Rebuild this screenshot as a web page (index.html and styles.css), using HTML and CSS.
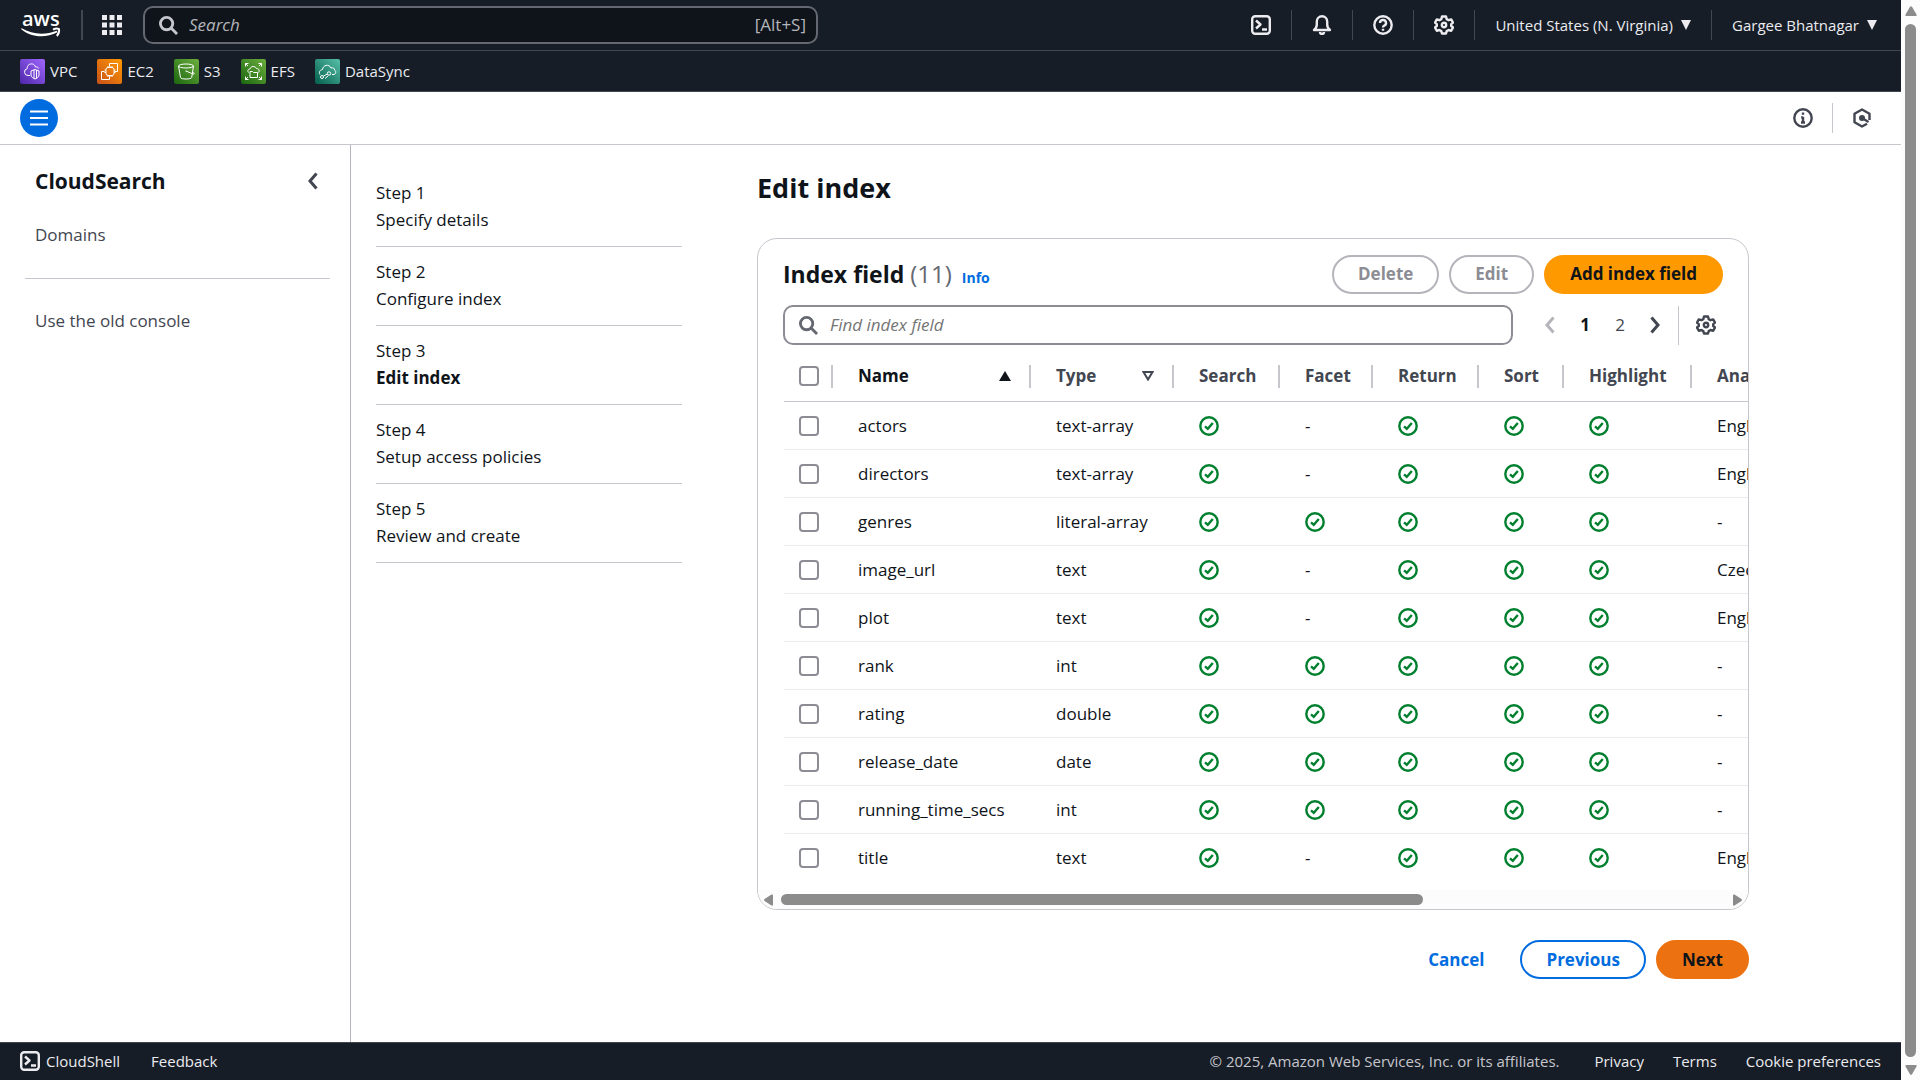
FILE: index.html
```html
<!DOCTYPE html>
<html lang="en">
<head>
<meta charset="utf-8">
<title>Edit index - CloudSearch</title>
<link rel="stylesheet" href="styles.css">
</head>
<body>
<svg class="sprite" aria-hidden="true">
  <symbol id="check" viewBox="0 0 20 20"><circle cx="10" cy="10" r="8.700"/><path d="M6 10.300l2.800 2.500L13.800 7"/></symbol>
  <symbol id="gear" viewBox="0 0 20 20"><path d="M8 1.500h4l.7 2.600 1.900 1.100 2.600-.8 1.800 3.300-1.800 1.500v1.800l1.800 1.500-1.800 3.300-2.600-.8-1.900 1.100-.7 2.400H8l-.7-2.400-1.900-1.100-2.600.8L1 12.500l1.800-1.500V9.200L1 7.700l1.800-3.300 2.600.8 1.900-1.100z"/><circle cx="10" cy="10" r="2.200"/></symbol>
  <symbol id="shell" viewBox="0 0 20 20"><rect x="1.200" y="1.200" width="17.600" height="17.600" rx="3"/><path d="M5 5.500l4.500 4L5 13.500M11 14.500h5"/></symbol>
  <symbol id="search" viewBox="0 0 20 20"><circle cx="8" cy="8" r="6.500"/><path d="M13 13l6 6"/></symbol>
  <symbol id="prev" viewBox="0 0 10 18"><path d="M8.500 1.500L2 9l6.500 7.500"/></symbol>
  <symbol id="next" viewBox="0 0 10 18"><path d="M1.500 1.500L8 9l-6.500 7.500"/></symbol>
  <symbol id="down" viewBox="0 0 10 10"><path d="M0 0h10L5 10z"/></symbol>
</svg>

<div class="page">
  <header class="topnav">
    <a class="logo" href="#" aria-label="AWS home">
      <svg width="40" height="44" viewBox="0 -8 40 44"><text x="1" y="15">aws</text><path class="smile" d="M0 18c10 8.500 24 9.500 36.500 3.200l-.8-1.500C24 24.500 11 23.500.6 17.300z"/><path class="tip" d="M32 18.600c2.500-1.200 5-1 6-.4.300 2-.4 5-2.200 6.800"/></svg>
    </a>
    <span class="bar bar-logo"></span>
    <button class="icon-button" aria-label="Services">
      <svg class="apps" width="20" height="20" viewBox="0 0 20 20"><path d="M0 0h5v5H0zM7.500 0h5v5h-5zM15 0h5v5h-5zM0 7.500h5v5H0zM7.500 7.500h5v5h-5zM15 7.500h5v5h-5zM0 15h5v5H0zM7.500 15h5v5h-5zM15 15h5v5h-5z"/></svg>
    </button>
    <label class="global-search">
      <svg class="line" width="19" height="19"><use href="#search"/></svg>
      <input type="search" placeholder="Search" aria-label="Search">
      <span class="hint">[Alt+S]</span>
    </label>
    <div class="utilities">
      <button class="icon-button" aria-label="CloudShell"><svg class="line" width="20" height="20"><use href="#shell"/></svg></button>
      <span class="bar"></span>
      <button class="icon-button" aria-label="Notifications"><svg class="line" width="20" height="20" viewBox="0 0 20 20"><path d="M2 15c2-1.500 2.800-3 2.800-5.500V6.500a5.200 5.200 0 0 1 10.400 0v3c0 2.500.8 4 2.800 5.500z"/><path d="M8 17a2 2 0 0 0 4 0"/></svg></button>
      <span class="bar"></span>
      <button class="icon-button" aria-label="Help"><svg class="line" width="20" height="20" viewBox="0 0 20 20"><circle cx="10" cy="10" r="8.700"/><path d="M7 8a3 3 0 1 1 4.200 2.700c-.9.400-1.200.8-1.200 1.800M10 13.800v2"/></svg></button>
      <span class="bar"></span>
      <button class="icon-button" aria-label="Settings"><svg class="line" width="20" height="20"><use href="#gear"/></svg></button>
      <span class="bar"></span>
      <button class="menu-button">United States (N. Virginia)<svg width="10" height="10"><use href="#down"/></svg></button>
      <span class="bar"></span>
      <button class="menu-button">Gargee Bhatnagar<svg width="10" height="10"><use href="#down"/></svg></button>
    </div>
  </header>

  <nav class="favorites" aria-label="Favorites">
    <a href="#"><svg class="tile vpc" width="25" height="25" viewBox="0 0 25 25"><path d="M10 16.500H8a3.500 3.500 0 0 1-.8-6.900C7 6 10 4.500 12.500 5c1.500.3 2.500 1.500 3 3 1.500-.3 3 .5 3.200 1.500"/><path d="M15 10.500l4 1.500v4c0 2-2 3.200-4 4-2-.8-4-2-4-4v-4zM14 11v8.500M16.500 11v8.500"/></svg>VPC</a>
    <a href="#"><svg class="tile ec2" width="25" height="25" viewBox="0 0 25 25"><path d="M12.500 7.500V4.500h8v8h-3M7.500 12.500h-3v8h8v-3"/><rect x="9" y="8.500" width="8" height="8" rx="2"/><path d="M11 7v1.500M13 7v1.500M15 7v1.500M11 16.500V18M13 16.500V18M15 16.500V18M7.500 11H9M7.500 13.500H9M17 11h1.500M17 13.500h1.500"/></svg>EC2</a>
    <a href="#"><svg class="tile s3" width="25" height="25" viewBox="0 0 25 25"><ellipse cx="12" cy="7" rx="7.500" ry="2"/><path d="M4.500 7l2 11.500c0 2 11 2 11.200 0L19.500 7M12 12l7 3c2 .6 1.500-1-.5-2M11.500 12h1"/></svg>S3</a>
    <a href="#"><svg class="tile efs" width="25" height="25" viewBox="0 0 25 25"><path d="M4.500 7.500v-3h3M4.500 4.500l2.500 2.500M17.500 4.500h3v3M20.500 4.500L18 7M4.500 17.500v3h3M4.500 20.500L7 18M17.500 20.500h3v-3M20.500 20.500L18 18M7.500 13.500c-1.500-2 0-3.500 1.500-3.500.5-3 5-3.500 6.500-.5 2.500 0 3.500 2 2 4M9 18.500v-6h2.500l1 1h4v5z"/></svg>EFS</a>
    <a href="#"><svg class="tile sync" width="25" height="25" viewBox="0 0 25 25"><path d="M5 15.500c-1.500-2.500 0-4.500 2.500-5C8 6 14 4.500 16 9c2.500-.8 3.500.5 3.500 2 2 1 1.500 4-.5 4.500h-2"/><circle cx="7" cy="18" r="1.500"/><circle cx="14" cy="14.500" r="1.700"/><path d="M8.500 17l4-2M10 19.500l3-2.500"/></svg>DataSync</a>
  </nav>

  <div class="toolbar">
    <button class="menu-toggle" aria-label="Open navigation"><svg width="18" height="16" viewBox="0 0 18 16"><path d="M0 1.500h18M0 8h18M0 14.500h18"/></svg></button>
    <div class="tools">
      <button class="icon-button" aria-label="Info"><svg class="line" width="20" height="20" viewBox="0 0 20 20"><circle cx="10" cy="10" r="8.700"/><path d="M10 4.500v2.200M10 8.700v6M8.200 9.500H10M8 14.500h4"/></svg></button>
      <span class="bar"></span>
      <button class="icon-button" aria-label="Assistant"><svg class="line" width="20" height="20" viewBox="0 0 20 20"><path d="M17.500 12V5.700L10 1.500 2.500 5.700v8.600l7.500 4.200 5-2.800"/><path d="M10 10l6.500 4"/><circle class="dot" cx="10" cy="10" r="1.800"/></svg></button>
    </div>
  </div>

  <div class="body">
    <aside class="sidebar">
      <div class="sidebar-head">
        <h2>CloudSearch</h2>
        <button class="icon-button" aria-label="Close navigation"><svg class="line" width="10" height="18"><use href="#prev"/></svg></button>
      </div>
      <a href="#">Domains</a>
      <hr>
      <a href="#">Use the old console</a>
    </aside>

    <main class="content">
      <ol class="steps">
        <li><span>Step 1</span><span>Specify details</span></li>
        <li><span>Step 2</span><span>Configure index</span></li>
        <li aria-current="step"><span>Step 3</span><strong>Edit index</strong></li>
        <li><span>Step 4</span><span>Setup access policies</span></li>
        <li><span>Step 5</span><span>Review and create</span></li>
      </ol>

      <section class="form">
        <h1>Edit index</h1>
        <div class="card">
          <div class="card-head">
            <div class="card-title">
              <h2>Index field <span class="count">(11)</span></h2>
              <a class="info" href="#">Info</a>
            </div>
            <div class="actions">
              <button class="btn" disabled>Delete</button>
              <button class="btn" disabled>Edit</button>
              <button class="btn primary">Add index field</button>
            </div>
          </div>
          <div class="filter">
            <label class="find">
              <svg class="line" width="19" height="19"><use href="#search"/></svg>
              <input type="search" placeholder="Find index field" aria-label="Find index field">
            </label>
            <div class="pages">
              <button class="page-button" aria-label="Previous page" disabled><svg class="line" width="10" height="18"><use href="#prev"/></svg></button>
              <button class="page-button current">1</button>
              <button class="page-button">2</button>
              <button class="page-button" aria-label="Next page"><svg class="line" width="10" height="18"><use href="#next"/></svg></button>
            </div>
            <button class="preferences" aria-label="Preferences"><svg class="line" width="20" height="20"><use href="#gear"/></svg></button>
          </div>

          <div class="table-wrap">
            <table>
              <colgroup><col class="c-check"><col class="c-name"><col class="c-type"><col class="c-search"><col class="c-facet"><col class="c-return"><col class="c-sort"><col class="c-highlight"><col class="c-analysis"></colgroup>
              <thead>
                <tr>
                  <th><div><input type="checkbox" aria-label="Select all"></div></th>
                  <th class="sorted"><div>Name<svg width="12" height="10" viewBox="0 0 12 10"><path d="M6 0l6 10H0z"/></svg></div></th>
                  <th><div>Type<svg width="12" height="10" viewBox="0 0 12 10"><path class="hollow" d="M1.500 1h9L6 8.500z"/></svg></div></th>
                  <th><div>Search</div></th>
                  <th><div>Facet</div></th>
                  <th><div>Return</div></th>
                  <th><div>Sort</div></th>
                  <th><div>Highlight</div></th>
                  <th><div>Analysis scheme</div></th>
                </tr>
              </thead>
              <tbody>
                <tr><td><input type="checkbox" aria-label="Select actors"></td><td>actors</td><td>text-array</td><td><svg class="ok"><use href="#check"/></svg></td><td>-</td><td><svg class="ok"><use href="#check"/></svg></td><td><svg class="ok"><use href="#check"/></svg></td><td><svg class="ok"><use href="#check"/></svg></td><td>English</td></tr>
                <tr><td><input type="checkbox" aria-label="Select directors"></td><td>directors</td><td>text-array</td><td><svg class="ok"><use href="#check"/></svg></td><td>-</td><td><svg class="ok"><use href="#check"/></svg></td><td><svg class="ok"><use href="#check"/></svg></td><td><svg class="ok"><use href="#check"/></svg></td><td>English</td></tr>
                <tr><td><input type="checkbox" aria-label="Select genres"></td><td>genres</td><td>literal-array</td><td><svg class="ok"><use href="#check"/></svg></td><td><svg class="ok"><use href="#check"/></svg></td><td><svg class="ok"><use href="#check"/></svg></td><td><svg class="ok"><use href="#check"/></svg></td><td><svg class="ok"><use href="#check"/></svg></td><td>-</td></tr>
                <tr><td><input type="checkbox" aria-label="Select image_url"></td><td>image_url</td><td>text</td><td><svg class="ok"><use href="#check"/></svg></td><td>-</td><td><svg class="ok"><use href="#check"/></svg></td><td><svg class="ok"><use href="#check"/></svg></td><td><svg class="ok"><use href="#check"/></svg></td><td>Czech</td></tr>
                <tr><td><input type="checkbox" aria-label="Select plot"></td><td>plot</td><td>text</td><td><svg class="ok"><use href="#check"/></svg></td><td>-</td><td><svg class="ok"><use href="#check"/></svg></td><td><svg class="ok"><use href="#check"/></svg></td><td><svg class="ok"><use href="#check"/></svg></td><td>English</td></tr>
                <tr><td><input type="checkbox" aria-label="Select rank"></td><td>rank</td><td>int</td><td><svg class="ok"><use href="#check"/></svg></td><td><svg class="ok"><use href="#check"/></svg></td><td><svg class="ok"><use href="#check"/></svg></td><td><svg class="ok"><use href="#check"/></svg></td><td><svg class="ok"><use href="#check"/></svg></td><td>-</td></tr>
                <tr><td><input type="checkbox" aria-label="Select rating"></td><td>rating</td><td>double</td><td><svg class="ok"><use href="#check"/></svg></td><td><svg class="ok"><use href="#check"/></svg></td><td><svg class="ok"><use href="#check"/></svg></td><td><svg class="ok"><use href="#check"/></svg></td><td><svg class="ok"><use href="#check"/></svg></td><td>-</td></tr>
                <tr><td><input type="checkbox" aria-label="Select release_date"></td><td>release_date</td><td>date</td><td><svg class="ok"><use href="#check"/></svg></td><td><svg class="ok"><use href="#check"/></svg></td><td><svg class="ok"><use href="#check"/></svg></td><td><svg class="ok"><use href="#check"/></svg></td><td><svg class="ok"><use href="#check"/></svg></td><td>-</td></tr>
                <tr><td><input type="checkbox" aria-label="Select running_time_secs"></td><td>running_time_secs</td><td>int</td><td><svg class="ok"><use href="#check"/></svg></td><td><svg class="ok"><use href="#check"/></svg></td><td><svg class="ok"><use href="#check"/></svg></td><td><svg class="ok"><use href="#check"/></svg></td><td><svg class="ok"><use href="#check"/></svg></td><td>-</td></tr>
                <tr><td><input type="checkbox" aria-label="Select title"></td><td>title</td><td>text</td><td><svg class="ok"><use href="#check"/></svg></td><td>-</td><td><svg class="ok"><use href="#check"/></svg></td><td><svg class="ok"><use href="#check"/></svg></td><td><svg class="ok"><use href="#check"/></svg></td><td>English</td></tr>
              </tbody>
            </table>
          </div>

          <div class="hscroll" aria-hidden="true">
            <svg width="9" height="12" viewBox="0 0 9 12"><path d="M9 1.500v9Q9 12 7.500 11.500L.5 7Q-.3 6 .5 5L7.500.5Q9 0 9 1.500z"/></svg>
            <div class="track"><div class="thumb"></div></div>
            <svg width="9" height="12" viewBox="0 0 9 12"><path d="M0 1.500v9Q0 12 1.500 11.500L8.500 7Q9.300 6 8.500 5L1.500.5Q0 0 0 1.500z"/></svg>
          </div>
        </div>

        <div class="form-actions">
          <button class="btn link">Cancel</button>
          <button class="btn normal">Previous</button>
          <button class="btn next">Next</button>
        </div>
      </section>
    </main>
  </div>

  <footer class="footer">
    <button class="footer-shell"><svg class="line" width="20" height="20"><use href="#shell"/></svg>CloudShell</button>
    <a href="#">Feedback</a>
    <div class="legal">
      <span>© 2025, Amazon Web Services, Inc. or its affiliates.</span>
      <a href="#">Privacy</a>
      <a href="#">Terms</a>
      <a href="#">Cookie preferences</a>
    </div>
  </footer>
</div>

<div class="vscroll" aria-hidden="true">
  <svg width="12" height="10" viewBox="0 0 12 10"><path d="M1.500 10h9Q12 10 11.500 8.500L7 .8Q6 -.3 5 .8L.5 8.500Q0 10 1.500 10z"/></svg>
  <div class="vthumb"></div>
  <svg width="12" height="10" viewBox="0 0 12 10"><path d="M1.500 0h9Q12 0 11.500 1.500L7 9.200Q6 10.300 5 9.200L.5 1.500Q0 0 1.500 0z"/></svg>
</div>
</body>
</html>
```
FILE: styles.css
```css
* { box-sizing: border-box; }

body {
  margin: 0;
  min-height: 100vh;
  display: flex;
  font-family: "Open Sans", "Noto Sans", sans-serif;
  font-size: 17px;
  line-height: 28px;
  color: #0f141a;
  background: #fff;
}

button, input { font: inherit; color: inherit; }
button { border: 0; padding: 0; background: none; display: flex; align-items: center; justify-content: center; }
a { color: inherit; text-decoration: none; }
svg { flex: none; display: block; }
h1, h2 { margin: 0; font-weight: 700; }
input[type="search"] { appearance: none; border: 0; outline: 0; padding: 0; background: none; flex: 1; min-width: 0; }
input::placeholder { font-style: italic; opacity: 1; }

.sprite { position: absolute; width: 0; height: 0; }
.line { fill: none; stroke: currentColor; stroke-width: 2.4; stroke-linejoin: round; }
.bar { width: 1px; height: 30px; background: #424650; }
.icon-button { min-width: 20px; height: 30px; }

.page { flex: 1; min-width: 0; display: flex; flex-direction: column; }

/* top navigation */
.topnav {
  display: flex;
  align-items: center;
  height: 51px;
  padding: 0 24px 0 21px;
  border-bottom: 1px solid #424650;
  background: #161d26;
  color: #ebebf0;
}
.logo text { font-size: 20px; font-weight: 600; fill: #fff; }
.smile { fill: #fff; }
.tip { fill: none; stroke: #fff; stroke-width: 2; }
.bar-logo { width: 2px; margin: 0 19px 0 20px; }
.apps { fill: currentColor; }
.global-search {
  display: flex;
  align-items: center;
  gap: 11px;
  flex: 0 1 675px;
  height: 38px;
  margin-left: 21px;
  padding: 0 10px 0 14px;
  border: 2px solid #656871;
  border-radius: 10px;
  background: #0f141a;
  color: #c6c6cd;
}
.global-search .line, .find .line { stroke-width: 3; }
.global-search input::placeholder { color: #b4b4bb; }
.hint { color: #b4b4bb; }
.utilities { display: flex; align-items: center; gap: 20px; margin-left: auto; font-size: 15px; font-weight: 500; }
.menu-button { gap: 8px; height: 30px; fill: currentColor; white-space: nowrap; }

.favorites {
  display: flex;
  align-items: center;
  gap: 20px;
  height: 41px;
  padding-left: 20px;
  border-bottom: 1px solid #424650;
  background: #161d26;
  color: #ebebf0;
  font-size: 15px;
  font-weight: 500;
}
.favorites a { display: flex; align-items: center; gap: 5px; }
.tile { border-radius: 2px; fill: none; stroke: #fff; stroke-width: 1; }
.vpc { background: linear-gradient(45deg, #4d27a8, #a166ff); }
.ec2 { background: linear-gradient(45deg, #c8511b, #f90); }
.s3, .efs { background: linear-gradient(45deg, #1b660f, #6cae3e); }
.sync { background: linear-gradient(45deg, #055f4e, #56c0a7); }

.toolbar {
  display: flex;
  align-items: center;
  justify-content: space-between;
  height: 53px;
  padding: 0 29px 0 20px;
  border-bottom: 1px solid #c6c6cd;
}
.menu-toggle { width: 38px; height: 38px; border-radius: 50%; background: #006ce0; }
.menu-toggle svg { stroke: #fff; stroke-width: 2; }
.tools { display: flex; align-items: center; gap: 19px; color: #424650; }
.tools .bar { background: #c6c6cd; }
.dot { fill: currentColor; }

/* page body */
.body { flex: 1; display: flex; }
.sidebar {
  flex: 0 0 351px;
  padding: 20px 20px 0 25px;
  border-right: 1px solid #b4b4bb;
  color: #424650;
}
.sidebar-head { display: flex; align-items: center; justify-content: space-between; height: 32px; margin-bottom: 24px; padding: 0 12px 0 10px; }
.sidebar-head h2 { font-size: 21px; color: #0f141a; }
.sidebar-head .icon-button { justify-content: flex-end; }
.sidebar-head .line, .pages .line { stroke-width: 3; stroke-linejoin: miter; }
.sidebar > a { display: block; padding-left: 10px; }
.sidebar hr { margin: 29px 0 28px; border: 0; border-top: 1px solid #c6c6cd; }

.content { flex: 1; min-width: 0; display: flex; gap: 75px; padding: 20px 25px 0; }
.steps { flex: 0 0 306px; margin: 0; padding: 3px 0 0; list-style: none; line-height: 27px; }
.steps li { display: flex; flex-direction: column; height: 79px; padding-top: 11px; border-bottom: 1px solid #c6c6cd; }
.steps strong { font-weight: 700; }

.form { flex: 0 1 992px; min-width: 0; display: flex; flex-direction: column; }
.form h1 { margin-bottom: 27px; font-size: 27px; line-height: 46px; }

.card { border: 1px solid #c6c6cd; border-radius: 20px; overflow: hidden; }
.card-head { display: flex; align-items: center; justify-content: space-between; padding: 15px 25px 0; }
.card-title { display: flex; align-items: baseline; gap: 10px; }
.card-head h2 { font-size: 23px; line-height: 39px; }
.count { font-size: 24px; font-weight: 400; color: #656871; }
.info { font-size: 14px; font-weight: 700; color: #006ce0; }
.actions { display: flex; gap: 10px; }

.btn { height: 39px; padding: 0 24px; border: 2px solid; border-radius: 20px; font-weight: 700; white-space: nowrap; }
.btn:disabled { color: #8c8c94; border-color: #b4b4bb; }
.primary { background: #f90; border-color: #f90; }
.normal { color: #006ce0; }
.link { color: #006ce0; border-color: transparent; }
.next { background: #ec7211; border-color: #ec7211; }

.filter { display: flex; align-items: center; padding: 11px 32px 0 25px; }
.find {
  flex: 1;
  display: flex;
  align-items: center;
  gap: 12px;
  height: 40px;
  padding: 0 14px;
  border: 2px solid #8c8c94;
  border-radius: 10px;
  color: #656871;
}
.pages { display: flex; gap: 5px; margin: 0 8px 0 22px; color: #424650; }
.page-button { width: 30px; height: 40px; }
.page-button:disabled { color: #b4b4bb; }
.current { font-weight: 700; color: #0f141a; }
.preferences { height: 39px; padding-left: 17px; border-left: 1px solid #c6c6cd; color: #424650; }

/* field table */
.table-wrap { margin-left: 26px; overflow: hidden; }
table { width: 1213px; border-collapse: separate; border-spacing: 0; table-layout: fixed; }
.c-check { width: 49px; }
.c-name { width: 198px; }
.c-type { width: 143px; }
.c-search, .c-return { width: 106px; }
.c-facet { width: 93px; }
.c-sort { width: 85px; }
.c-highlight { width: 128px; }
th { height: 57px; padding: 6px 0 0; border-bottom: 1px solid #c6c6cd; text-align: left; font-weight: 700; color: #424650; }
th div { display: flex; align-items: center; justify-content: space-between; height: 23px; padding: 0 18px 0 25px; border-right: 2px solid #c6c6cd; white-space: nowrap; }
th:first-child div, td:first-child { padding-left: 15px; }
th:first-child div { padding-right: 0; }
th:last-child div { border-right: 0; }
th svg { fill: currentColor; }
th .hollow { fill: none; stroke: currentColor; stroke-width: 2; }
.sorted { color: #0f141a; }
td { height: 48px; padding: 0 0 0 25px; border-bottom: 1px solid #ebebf0; white-space: nowrap; }
tbody tr:last-child td { border-bottom-color: transparent; }
input[type="checkbox"] { appearance: none; display: block; width: 20px; height: 20px; margin: 0; border: 2px solid #8c8c94; border-radius: 4px; background: #fff; }
.ok { width: 20px; height: 20px; fill: none; stroke: #00802f; stroke-width: 2.4; }

.hscroll { display: flex; align-items: center; height: 19px; margin-top: 8px; padding: 0 6px; background: #fcfcfc; fill: #8b8b8b; }
.track { flex: 1; padding: 0 8px; }
.thumb { width: 68%; height: 11px; border-radius: 6px; background: #8b8b8b; }

.form-actions { display: flex; justify-content: flex-end; gap: 10px; padding: 30px 0 63px; }

.footer {
  display: flex;
  align-items: center;
  gap: 31px;
  height: 38px;
  padding: 0 20px 1px;
  border-top: 1px solid #424650;
  background: #161d26;
  color: #ebebf0;
  font-size: 15px;
  font-weight: 500;
}
.footer-shell { gap: 6px; }
.legal { display: flex; gap: 29px; margin-left: auto; font-weight: 400; }
.legal span { margin-right: 6px; color: #c6c6cd; }

/* window scroll bar */
.vscroll { flex: 0 0 19px; display: flex; flex-direction: column; align-items: center; gap: 8px; padding: 6px 0 5px; background: #fcfcfc; fill: #8b8b8b; }
.vthumb { flex: 1; width: 11px; border-radius: 6px; background: #8b8b8b; }
```
